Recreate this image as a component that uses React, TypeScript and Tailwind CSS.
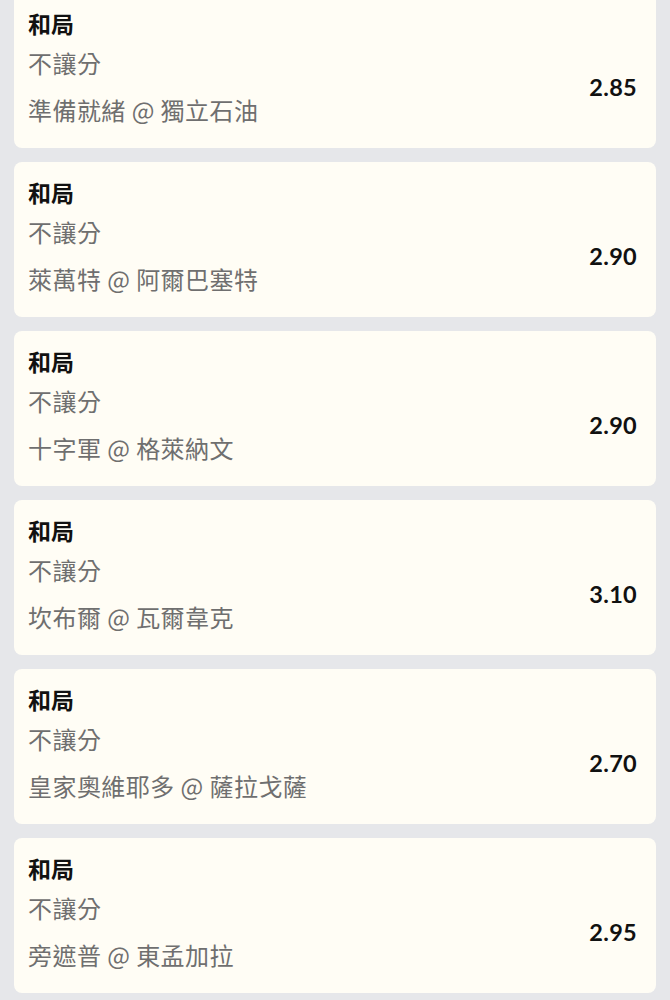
const bets = [
  { teams: '準備就緒 @ 獨立石油', odds: '2.85' },
  { teams: '萊萬特 @ 阿爾巴塞特', odds: '2.90' },
  { teams: '十字軍 @ 格萊納文', odds: '2.90' },
  { teams: '坎布爾 @ 瓦爾韋克', odds: '3.10' },
  { teams: '皇家奧維耶多 @ 薩拉戈薩', odds: '2.70' },
  { teams: '旁遮普 @ 東孟加拉', odds: '2.95' },
];

function BetCard({ teams, odds }: { teams: string; odds: string }) {
  return (
    <div className="h-[155px] shrink-0 rounded-[8px] bg-[#fffdf5] pl-[14px] pr-[19px] pt-[15px]">
      <div className="h-[32px] text-[23px] leading-[32px] font-bold text-[#111111]">和局</div>
      <div className="mt-[8px] flex items-center justify-between">
        <div className="flex flex-col gap-[17px] font-['Noto_Sans_CJK_TC',sans-serif] text-[24px] leading-[30px] tracking-[0.45px] text-[#6f6f6f]">
          <div>不讓分</div>
          <div>{teams}</div>
        </div>
        <div className="pt-[2px] text-[23.5px] font-bold tracking-[0.3px] text-[#111111]">{odds}</div>
      </div>
    </div>
  );
}

export default function App() {
  return (
    <div
      className="h-[1000px] overflow-hidden bg-[#e6e7ea] px-[14px]"
      style={{ fontFamily: 'Lato, "Noto Sans CJK TC", sans-serif' }}
    >
      <div className="-mt-[7px] flex flex-col gap-[14px]">
        {bets.map((b) => (
          <BetCard key={b.teams} teams={b.teams} odds={b.odds} />
        ))}
      </div>
    </div>
  );
}
